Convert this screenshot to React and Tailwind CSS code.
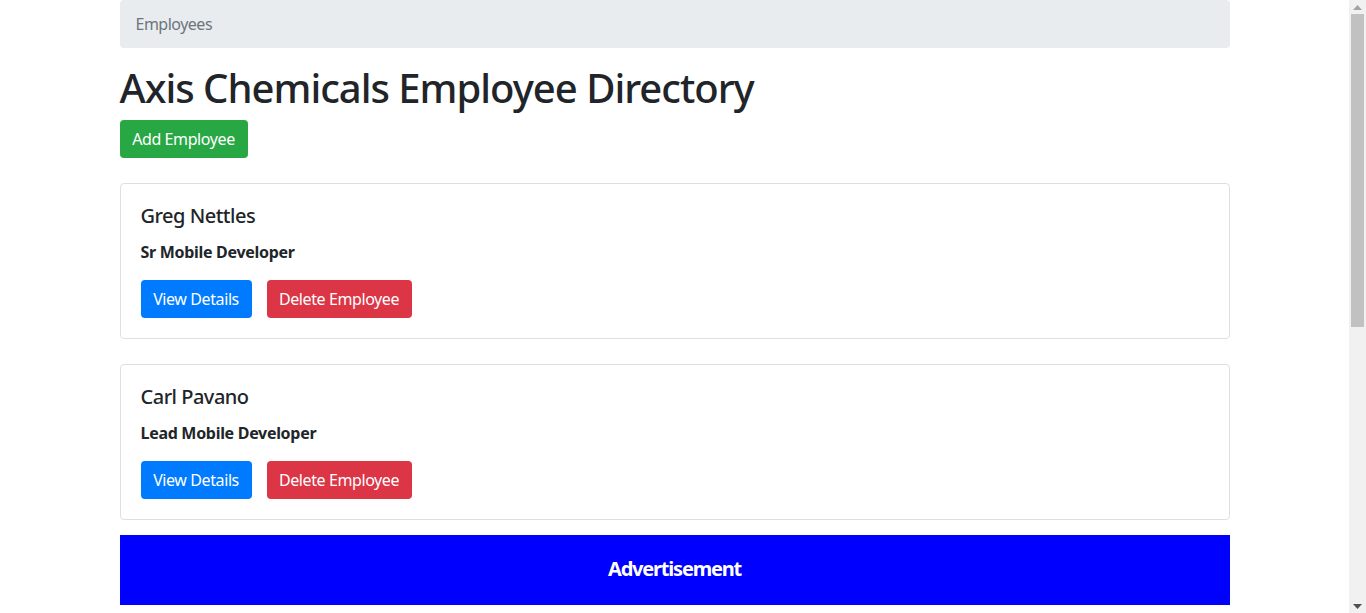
import React from "react"

const employees = [
  { name: "Greg Nettles", title: "Sr Mobile Developer" },
  { name: "Carl Pavano", title: "Lead Mobile Developer" },
]

function EmployeeCard({ employee }) {
  return (
    <div className="mt-[25px] rounded-[4px] border border-[#dfdfdf] bg-white p-5">
      <h5 className="mb-3 text-[20px] font-medium leading-6 tracking-[-0.5px] text-[#212529]">
        {employee.name}
      </h5>
      <p className="mb-4 text-[16px] font-bold leading-6 tracking-[-0.3px] text-[#212529]">
        {employee.title}
      </p>
      <div className="flex gap-[15px]">
        <button className="h-[38px] w-[111px] rounded-[4px] bg-[#007bff] text-[16px] leading-6 tracking-[-0.4px] text-white">
          View Details
        </button>
        <button className="h-[38px] w-[145px] rounded-[4px] bg-[#dc3545] text-[16px] leading-6 tracking-[-0.4px] text-white">
          Delete Employee
        </button>
      </div>
    </div>
  )
}

function Scrollbar() {
  return (
    <div className="flex h-full w-[17px] shrink-0 flex-col items-center bg-[#f1f1f1]">
      <div className="flex h-[14px] items-center justify-center">
        <svg width="9" height="5" viewBox="0 0 9 5">
          <path d="M0 5 L4.5 0 L9 5 Z" fill="#a3a3a3" />
        </svg>
      </div>
      <div className="h-[313px] w-[13px] bg-[#c1c1c1]" />
      <div className="flex-1" />
      <div className="flex h-[14px] items-center justify-center">
        <svg width="9" height="5" viewBox="0 0 9 5">
          <path d="M0 0 L9 0 L4.5 5 Z" fill="#505050" />
        </svg>
      </div>
    </div>
  )
}

export default function App() {
  return (
    <div
      className="flex h-screen overflow-hidden bg-white text-[#212529]"
      style={{ fontFamily: '"Segoe UI", "Noto Sans", Arial, sans-serif' }}
    >
      <div className="flex-1 overflow-hidden">
        <div className="mx-auto w-[1110px]">
          {/* Breadcrumb */}
          <div className="mb-4 h-12 rounded-[4px] bg-[#e9ecef] px-4 py-3 text-[16px] leading-6 tracking-[-0.5px] text-[#6c757d]">
            Employees
          </div>

          <h1 className="mb-2 text-[40px] font-medium leading-[48px] tracking-[-1px] text-[#212529]">
            Axis Chemicals Employee Directory
          </h1>

          <button className="h-[38px] w-[128px] rounded-[4px] bg-[#28a745] text-[16px] leading-6 tracking-[-0.4px] text-white">
            Add Employee
          </button>

          {employees.map((e) => (
            <EmployeeCard key={e.name} employee={e} />
          ))}

          {/* Ad */}
          <div className="mt-[15px] flex h-[70px] items-center justify-center bg-[#0000ff] pb-[3px] text-[20px] font-bold tracking-[-1.2px] text-white">
            Advertisement
          </div>
        </div>
      </div>
      <Scrollbar />
    </div>
  )
}
